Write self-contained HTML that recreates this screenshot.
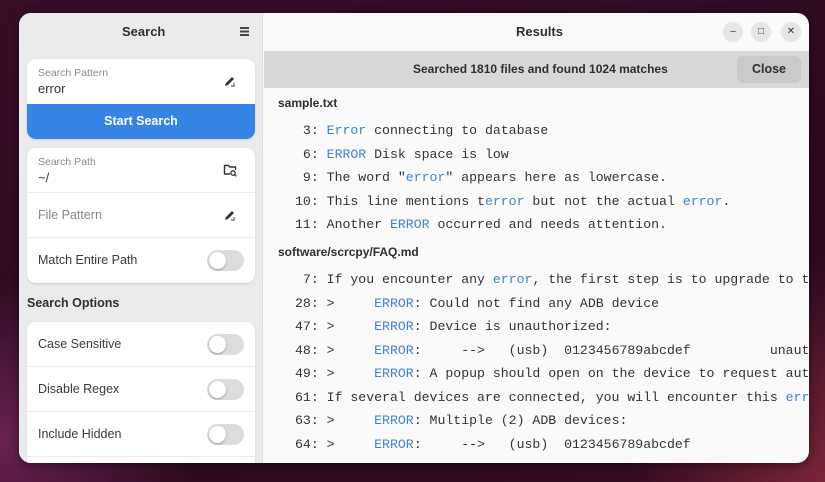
<!DOCTYPE html><html><head><style>
*{margin:0;padding:0;box-sizing:border-box}
body{width:825px;height:482px;overflow:hidden;position:relative;font-family:"Liberation Sans",sans-serif;
background:radial-gradient(ellipse 200px 160px at 0px 440px,#6a2250,transparent),radial-gradient(ellipse 200px 220px at 825px 482px,#7a2636,transparent),linear-gradient(160deg,#3a0d2a,#2b0a22 60%,#360b24);}
.win{position:absolute;left:19px;top:13px;width:790px;height:450px;border-radius:12px;overflow:hidden;background:#fafafa;box-shadow:0 2px 10px rgba(0,0,0,.5)}
.side{position:absolute;left:0;top:0;width:244px;height:450px;background:#ebebed;border-right:1px solid #ddd}
.t{position:absolute;font-weight:bold;font-size:13px;color:#2e2e2e}
.card{position:absolute;left:8px;width:228px;background:#fff;border-radius:9px;overflow:hidden;box-shadow:0 1px 2px rgba(0,0,0,.12)}
.row{position:relative;height:45px;border-bottom:1px solid #ececec}
.lab{position:absolute;left:11px;top:8px;font-size:10.5px;color:#8a8a8a}
.val{position:absolute;left:11px;top:22px;font-size:13px;color:#333}
.ml{position:absolute;left:11px;top:15px;font-size:12.5px;color:#3a3a3a}
.sw{position:absolute;right:11px;top:12px;width:37px;height:21px;border-radius:11px;background:#dcdcdc}
.sw:after{content:"";position:absolute;left:2px;top:2px;width:17px;height:17px;border-radius:50%;background:#fff;box-shadow:0 1px 2px rgba(0,0,0,.3)}
.ic{position:absolute;right:18px;top:15px}
.btn{height:35px;background:#3584e4;color:#fff;font-weight:bold;font-size:12.5px;text-align:center;line-height:35px}
.bar{position:absolute;left:245px;top:38px;width:545px;height:37px;background:#d8d8d8}
pre{position:absolute;font-family:"Liberation Mono",monospace;font-size:13.2px;line-height:23.5px;color:#333;white-space:pre}
.e{color:#3f83cf}
.fh{position:absolute;left:259px;font-weight:bold;font-size:12px;color:#2e2e2e}
.wb{position:absolute;top:9px;width:20px;height:20px;border-radius:50%;background:#e6e6e6;font-size:10px;text-align:center;line-height:20px;color:#333}
</style></head><body>
<div class="win">
<div class="side">
<div class="t" style="left:103px;top:11px">Search</div>
<div style="position:absolute;left:221px;top:14px;width:9px;height:1.5px;background:#444;box-shadow:0 3.5px #444,0 7px #444"></div>
<div class="card" style="top:46px">
<div class="row" style="border:none"><div class="lab">Search Pattern</div><div class="val">error</div>
<svg class="ic" width="14" height="14" viewBox="0 0 14 14"><path d="M2 12l1-3 6-6 2 2-6 6z" fill="#333"/><path d="M8 12h4M10 10h2" stroke="#333" stroke-width="1"/></svg></div>
<div class="btn">Start Search</div></div>
<div class="card" style="top:135px">
<div class="row"><div class="lab">Search Path</div><div class="val">~/</div>
<svg class="ic" width="14" height="14" viewBox="0 0 14 14"><path d="M7 11H1.5V2.5h4l1.5 1.5h5.5v3" fill="none" stroke="#333" stroke-width="1.4"/><circle cx="10" cy="10" r="2.2" fill="none" stroke="#333" stroke-width="1.3"/><path d="M11.6 11.6l1.6 1.6" stroke="#333" stroke-width="1.4"/></svg></div>
<div class="row"><div class="ml" style="color:#888">File Pattern</div>
<svg class="ic" width="14" height="14" viewBox="0 0 14 14"><path d="M2 12l1-3 6-6 2 2-6 6z" fill="#333"/><path d="M8 12h4M10 10h2" stroke="#333" stroke-width="1"/></svg></div>
<div class="row" style="border:none"><div class="ml">Match Entire Path</div><div class="sw"></div></div></div>
<div class="t" style="left:8px;top:283px;font-size:12.5px">Search Options</div>
<div class="card" style="top:309px;height:160px">
<div class="row"><div class="ml">Case Sensitive</div><div class="sw"></div></div>
<div class="row"><div class="ml">Disable Regex</div><div class="sw"></div></div>
<div class="row"><div class="ml">Include Hidden</div><div class="sw"></div></div></div>
</div>
<div class="t" style="left:497px;top:11px">Results</div>
<div class="wb" style="left:704px">–</div><div class="wb" style="left:732px">□</div><div class="wb" style="left:762px">✕</div>
<div class="bar"><div class="t" style="left:149px;top:11px;font-size:12px">Searched 1810 files and found 1024 matches</div>
<div style="position:absolute;left:473px;top:5px;width:64px;height:27px;background:#c9c9c9;border-radius:6px;font-weight:bold;font-size:12.5px;color:#2e2e2e;text-align:center;line-height:27px">Close</div></div>
<div class="fh" style="top:83px">sample.txt</div>
<pre style="left:276px;top:106px"> 3: <span class="e">Error</span> connecting to database
 6: <span class="e">ERROR</span> Disk space is low
 9: The word "<span class="e">error</span>" appears here as lowercase.
10: This line mentions t<span class="e">error</span> but not the actual <span class="e">error</span>.
11: Another <span class="e">ERROR</span> occurred and needs attention.</pre>
<div class="fh" style="top:232px">software/scrcpy/FAQ.md</div>
<pre style="left:276px;top:255px"> 7: If you encounter any <span class="e">error</span>, the first step is to upgrade to the
28: >     <span class="e">ERROR</span>: Could not find any ADB device
47: >     <span class="e">ERROR</span>: Device is unauthorized:
48: >     <span class="e">ERROR</span>:     -->   (usb)  0123456789abcdef          unauthorized
49: >     <span class="e">ERROR</span>: A popup should open on the device to request auth
61: If several devices are connected, you will encounter this <span class="e">error</span>
63: >     <span class="e">ERROR</span>: Multiple (2) ADB devices:
64: >     <span class="e">ERROR</span>:     -->   (usb)  0123456789abcdef</pre>
</div>
</body></html>
